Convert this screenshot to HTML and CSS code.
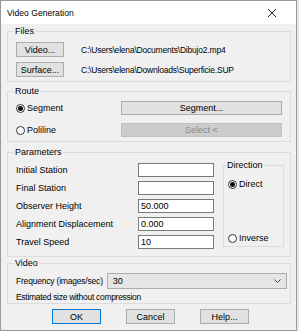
FILE: index.html
```html
<!DOCTYPE html>
<html lang="en">

<head>
    <meta charset="UTF-8">
    <meta name="viewport" content="width=device-width, initial-scale=1.0">
    <title>Video Generation</title>
    <link rel="stylesheet" href="styles.css">
</head>

<body>

    <div class="window">
        <div class="titlebar">
            <span class="title">Video Generation</span>
            <svg class="close" width="10" height="10" viewBox="0 0 10 10">
                <path d="M1 1 L9 9 M9 1 L1 9" stroke="#222" stroke-width="1" fill="none"/>
            </svg>
        </div>

        <div class="content">
            <fieldset class="group files">
                <legend>Files</legend>
                <div class="file-row">
                    <button class="btn small">Video...</button>
                    <span class="path">C:\Users\elena\Documents\Dibujo2.mp4</span>
                </div>
                <div class="file-row">
                    <button class="btn small">Surface...</button>
                    <span class="path">C:\Users\elena\Downloads\Superficie.SUP</span>
                </div>
            </fieldset>

            <fieldset class="group route">
                <legend>Route</legend>
                <div class="route-row">
                    <label class="radio"><span class="dot checked"></span>Segment</label>
                    <button class="btn wide">Segment...</button>
                </div>
                <div class="route-row">
                    <label class="radio"><span class="dot"></span>Poliline</label>
                    <button class="btn wide" disabled>Select &lt;</button>
                </div>
            </fieldset>

            <fieldset class="group params">
                <legend>Parameters</legend>
                <div class="param-list">
                    <div class="param-row"><span class="param-label">Initial Station</span><input class="field" type="text"></div>
                    <div class="param-row"><span class="param-label">Final Station</span><input class="field" type="text"></div>
                    <div class="param-row"><span class="param-label">Observer Height</span><input class="field" type="text" value="50.000"></div>
                    <div class="param-row"><span class="param-label">Alignment Displacement</span><input class="field" type="text" value="0.000"></div>
                    <div class="param-row"><span class="param-label">Travel Speed</span><input class="field" type="text" value="10"></div>
                </div>
                <fieldset class="group direction">
                    <legend>Direction</legend>
                    <label class="radio"><span class="dot checked"></span>Direct</label>
                    <label class="radio"><span class="dot"></span>Inverse</label>
                </fieldset>
            </fieldset>

            <fieldset class="group video">
                <legend>Video</legend>
                <div class="freq-row">
                    <span class="freq-label">Frequency (images/sec)</span>
                    <div class="combo">
                        <span>30</span>
                        <svg width="7" height="4" viewBox="0 0 7 4">
                            <path d="M0.5 0.5 L3.5 3.5 L6.5 0.5" stroke="#444" stroke-width="1" fill="none"/>
                        </svg>
                    </div>
                </div>
                <div class="estimate">Estimated size without compression</div>
            </fieldset>

            <div class="actions">
                <button class="btn action default">OK</button>
                <button class="btn action">Cancel</button>
                <button class="btn action">Help...</button>
            </div>
        </div>
    </div>

</body>

</html>
```

FILE: styles.css
```css
body {
    font-family: "Liberation Sans", Arial, sans-serif;
    font-size: 9px;
    margin: 0;
    padding: 0;
    background-color: #e6e6e6;
}

/* Window frame */
.window {
    width: 297px;
    height: 331px;
    box-sizing: border-box;
    border: 1px solid #999;
    background-color: #f0f0f0;
}

.titlebar {
    display: flex;
    align-items: center;
    justify-content: space-between;
    height: 23px;
    background-color: #fff;
    padding: 0 19px 0 6px;
}

.title {
    font-size: 8.6px;
    color: #000;
}

.content {
    padding: 2px 5px 0 6px;
}

/* Group boxes */
.group {
    margin: 0;
    border: 1px solid #dcdcdc;
    padding: 0 8px;
}

.group legend {
    padding: 0 1px;
    margin-left: -2px;
    line-height: 10px;
    height: 10px;
    font-size: 9px;
}

.files {
    padding-top: 6px;
    padding-bottom: 4px;
    display: flex;
    flex-direction: column;
    gap: 5px;
}

.route {
    margin-top: 4px;
    padding-top: 5px;
    padding-bottom: 4px;
    display: flex;
    flex-direction: column;
    gap: 8px;
}

.params {
    margin-top: 5px;
    padding-top: 6px;
    padding-bottom: 7px;
    padding-right: 6px;
    display: flex;
    align-items: flex-start;
}

.video {
    margin-top: 1px;
    padding-top: 5px;
    padding-bottom: 1px;
    padding-right: 3px;
    font-size: 8.5px;
}

/* Buttons */
.btn {
    font-family: inherit;
    font-size: 9px;
    color: #000;
    background-color: #e1e1e1;
    border: 1px solid #adadad;
    padding: 0;
    margin: 0;
    box-sizing: border-box;
}

.btn:disabled {
    background-color: #cccccc;
    border-color: #bfbfbf;
    color: #8a8a8a;
}

.small {
    width: 48px;
    height: 15px;
}

.wide {
    width: 161px;
    height: 14px;
}

.file-row {
    display: flex;
    align-items: center;
    gap: 17px;
}

.path {
    white-space: nowrap;
    font-size: 8.5px;
    letter-spacing: -0.2px;
}

.route-row {
    display: flex;
    align-items: center;
    justify-content: space-between;
}

/* Radio buttons */
.radio {
    display: flex;
    align-items: center;
    gap: 2px;
}

.dot {
    width: 9px;
    height: 9px;
    box-sizing: border-box;
    border: 1px solid #333;
    border-radius: 50%;
    background-color: #fff;
    display: flex;
    align-items: center;
    justify-content: center;
}

.dot.checked::after {
    content: "";
    width: 5px;
    height: 5px;
    border-radius: 50%;
    background-color: #111;
}

/* Parameters */
.param-list {
    display: flex;
    flex-direction: column;
    gap: 4px;
}

.param-row {
    display: flex;
    align-items: center;
}

.param-label {
    width: 122px;
}

.field {
    width: 76px;
    height: 14px;
    box-sizing: border-box;
    border: 1px solid #7a7a7a;
    background-color: #fff;
    font-family: inherit;
    font-size: 9px;
    padding: 0 2px;
    margin: 0;
    outline: none;
}

.direction {
    width: 61px;
    height: 87px;
    box-sizing: border-box;
    margin-top: -3px;
    margin-left: 9px;
    padding: 9px 4px 3px;
    display: flex;
    flex-direction: column;
    justify-content: space-between;
}

/* Video */
.freq-row {
    display: flex;
    align-items: center;
    gap: 4px;
}

.freq-label {
    white-space: nowrap;
    letter-spacing: -0.2px;
}

.combo {
    flex: 1;
    height: 16px;
    box-sizing: border-box;
    border: 1px solid #adadad;
    background-color: #e5e5e5;
    display: flex;
    align-items: center;
    justify-content: space-between;
    padding: 0 5px 0 5px;
    font-size: 9px;
}

.estimate {
    line-height: 10px;
    margin-top: 3px;
    letter-spacing: -0.3px;
}

/* Dialog buttons */
.actions {
    display: flex;
    gap: 25px;
    margin-top: 5px;
    padding-left: 45px;
}

.action {
    width: 49px;
    height: 15px;
}

.default {
    border-color: #0078d7;
}
```
